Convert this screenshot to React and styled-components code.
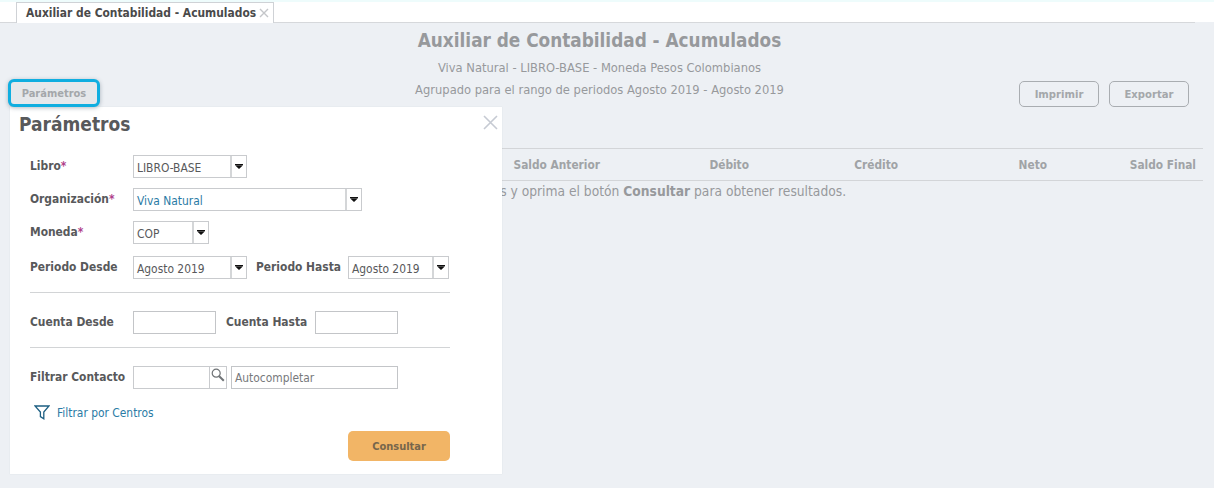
import React from "react";
import styled, { createGlobalStyle } from "styled-components";

const GlobalStyle = createGlobalStyle`
  html, body {
    margin: 0;
    padding: 0;
    background: #edf0f4;
    font-family: "DejaVu Sans Condensed", "DejaVu Sans", sans-serif;
    overflow: hidden;
  }
`;

const Page = styled.div`
  position: relative;
  width: 1214px;
  height: 488px;
  overflow: hidden;
`;

const TabBar = styled.div`
  height: 22px;
  box-sizing: border-box;
  background: #fff;
  border-top: 2px solid #eefcfc;
  padding-left: 16px;
  display: flex;
`;

const Tab = styled.div`
  height: 21px;
  box-sizing: border-box;
  border: 1px solid #cfd2d6;
  border-bottom: 0;
  background: #fff;
  padding: 0 4px 0 9px;
  display: flex;
  align-items: center;
  gap: 3px;
  font-size: 11.9px;
  font-weight: bold;
  color: #4a4a4a;
  position: relative;
  z-index: 1;
`;

const TabClose = styled.span`
  display: flex;
`;

const TabLine = styled.div`
  width: 1195px;
  height: 1px;
  background: #d6d8db;
`;

const Header = styled.div`
  width: 1199px;
  text-align: center;
  padding-top: 6px;
`;

const Title = styled.h1`
  margin: 0;
  font-size: 18.8px;
  line-height: 24px;
  font-weight: bold;
  color: #97999c;
`;

const Subtitle = styled.div`
  font-size: 12.8px;
  line-height: 22px;
  color: #97999c;
  margin-top: ${(p) => p.$top || 0}px;
`;

const Toolbar = styled.div`
  display: flex;
  justify-content: flex-end;
  gap: 10px;
  width: 1189px;
  margin-top: -20px;
`;

const OutlineButton = styled.button`
  width: 80px;
  height: 26px;
  box-sizing: border-box;
  border: 1px solid #a9adb1;
  border-radius: 5px;
  background: transparent;
  font: bold 11.2px "DejaVu Sans Condensed", "DejaVu Sans", sans-serif;
  color: #a4a7aa;
  padding: 0;
`;

const HeadRow = styled.div`
  margin-top: 41px;
  margin-left: 10px;
  width: 1193px;
  height: 33px;
  box-sizing: border-box;
  border-top: 1px solid #d3d5d8;
  border-bottom: 1px solid #d3d5d8;
  display: grid;
  grid-template-columns: 1fr repeat(5, 149px);
  align-items: center;
  padding-right: 7px;
`;

const HeadCell = styled.div`
  text-align: right;
  font-size: 11.8px;
  font-weight: bold;
  color: #a0a3a6;
`;

const Message = styled.div`
  margin-top: 1px;
  padding-left: 344px;
  font-size: 13.7px;
  line-height: 19px;
  color: #97999c;
  white-space: nowrap;

  b {
    font-weight: bold;
  }
`;

const ParamButton = styled.button`
  position: absolute;
  left: 8px;
  top: 79px;
  width: 92px;
  height: 28px;
  box-sizing: border-box;
  border: 3px solid #10aee0;
  border-radius: 6px;
  background: #e6e8eb;
  box-shadow: 0 1px 4px rgba(40, 60, 80, 0.35);
  font: bold 11px "DejaVu Sans Condensed", "DejaVu Sans", sans-serif;
  color: #a4a7aa;
  padding: 0;
  z-index: 3;
`;

const Panel = styled.div`
  position: absolute;
  left: 10px;
  top: 107px;
  width: 492px;
  height: 367px;
  box-sizing: border-box;
  background: #fff;
  box-shadow: 0 0 1px rgba(90, 100, 110, 0.18);
  padding: 6px 52px 0 20px;
  z-index: 2;
`;

const PanelTitle = styled.h2`
  margin: 0 0 0 -11px;
  font-size: 19px;
  line-height: 23px;
  font-weight: bold;
  color: #58595b;
`;

const CloseButton = styled.span`
  position: absolute;
  right: 4px;
  top: 8px;
  display: flex;
`;

const Rows = styled.div`
  margin-top: 19px;
  display: flex;
  flex-direction: column;
`;

const Row = styled.div`
  display: flex;
  align-items: center;
  height: 23px;
  margin-top: ${(p) => p.$top ?? 0}px;
  margin-bottom: ${(p) => p.$gap ?? 10}px;
`;

const Label = styled.label`
  width: ${(p) => p.$width || 103}px;
  margin-left: ${(p) => p.$left || 0}px;
  flex-shrink: 0;
  font-size: 11.9px;
  font-weight: bold;
  color: #58595b;
  white-space: nowrap;
  position: relative;
  top: -1px;

  i {
    font-style: normal;
    color: #b0408a;
  }
`;

const SelectBox = styled.div`
  width: ${(p) => p.$width}px;
  height: 23px;
  box-sizing: border-box;
  border: 1px solid #c9cbce;
  background: #fff;
  display: flex;
  align-items: center;
  flex-shrink: 0;
`;

const SelectValue = styled.span`
  flex: 1;
  padding: 2px 0 0 3px;
  font-size: 11.9px;
  color: ${(p) => (p.$link ? "#2b7ba5" : "#58595b")};
  white-space: nowrap;
`;

const SelectArrow = styled.span`
  width: 16px;
  height: 21px;
  box-sizing: border-box;
  border-left: 2px solid #d4d6d8;
  display: flex;
  align-items: center;
  justify-content: center;
`;

const TextInput = styled.div`
  width: ${(p) => p.$width}px;
  height: 23px;
  box-sizing: border-box;
  border: 1px solid #c3c5c8;
  background: #fff;
  padding-left: 3px;
  font-size: 11.9px;
  line-height: 23px;
  color: #77797c;
  flex-shrink: 0;
`;

const SearchInput = styled.div`
  width: 94px;
  height: 23px;
  box-sizing: border-box;
  border: 1px solid #c9cbce;
  display: flex;
  justify-content: flex-end;
  margin-right: 4px;
  flex-shrink: 0;
`;

const SearchAddon = styled.span`
  width: 17px;
  box-sizing: border-box;
  border-left: 1px solid #c9cbce;
  display: flex;
  justify-content: center;
  padding-top: 1px;
`;

const Divider = styled.hr`
  margin: 0;
  border: 0;
  height: 1px;
  width: 420px;
  background: #d2d4d6;
`;

const FilterLink = styled.a`
  margin: 14px 0 0 4px;
  display: flex;
  align-items: center;
  gap: 7px;
  height: 19px;
  font-size: 11.9px;
  color: #2b7ba5;
`;

const Footer = styled.div`
  display: flex;
  justify-content: flex-end;
  margin-top: 9px;
  width: 420px;
`;

const SubmitButton = styled.button`
  width: 102px;
  height: 30px;
  border: 0;
  border-radius: 5px;
  background: #f2b566;
  font: bold 11px "DejaVu Sans Condensed", "DejaVu Sans", sans-serif;
  color: #77664c;
  padding: 0;
`;

const Arrow = () => (
  <svg width="8" height="5" viewBox="0 0 8 5">
    <path d="M0 0h8v1H0zM0 1.2h8L4 5z" fill="#111" />
  </svg>
);

const Select = ({ width, value, link }) => (
  <SelectBox $width={width}>
    <SelectValue $link={link}>{value}</SelectValue>
    <SelectArrow>
      <Arrow />
    </SelectArrow>
  </SelectBox>
);

const columns = ["Saldo Anterior", "Débito", "Crédito", "Neto", "Saldo Final"];

export default function App() {
  return (
    <Page>
      <GlobalStyle />
      <TabBar>
        <Tab>
          Auxiliar de Contabilidad - Acumulados
          <TabClose>
            <svg width="10" height="10" viewBox="0 0 10 10">
              <path d="M1 1l8 8M9 1L1 9" stroke="#c4c6c9" strokeWidth="1.4" fill="none" />
            </svg>
          </TabClose>
        </Tab>
      </TabBar>
      <TabLine />
      <Header>
        <Title>Auxiliar de Contabilidad - Acumulados</Title>
        <Subtitle $top={4}>Viva Natural - LIBRO-BASE - Moneda Pesos Colombianos</Subtitle>
        <Subtitle>Agrupado para el rango de periodos Agosto 2019 - Agosto 2019</Subtitle>
      </Header>
      <Toolbar>
        <OutlineButton>Imprimir</OutlineButton>
        <OutlineButton>Exportar</OutlineButton>
      </Toolbar>
      <HeadRow>
        <div />
        {columns.map((c) => (
          <HeadCell key={c}>{c}</HeadCell>
        ))}
      </HeadRow>
      <Message>
        Seleccione los parámetros y oprima el botón <b>Consultar</b> para obtener resultados.
      </Message>

      <ParamButton>Parámetros</ParamButton>
      <Panel>
        <PanelTitle>Parámetros</PanelTitle>
        <CloseButton>
          <svg width="15" height="15" viewBox="0 0 15 15">
            <path d="M1 1l13 13M14 1L1 14" stroke="#c6cad3" strokeWidth="1.6" fill="none" />
          </svg>
        </CloseButton>
        <Rows>
          <Row>
            <Label>Libro<i>*</i></Label>
            <Select width={114} value="LIBRO-BASE" />
          </Row>
          <Row>
            <Label>Organización<i>*</i></Label>
            <Select width={229} value="Viva Natural" link />
          </Row>
          <Row $gap={12}>
            <Label>Moneda<i>*</i></Label>
            <Select width={76} value="COP" />
          </Row>
          <Row $gap={13}>
            <Label>Periodo Desde</Label>
            <Select width={114} value="Agosto 2019" />
            <Label $width={92} $left={9}>Periodo Hasta</Label>
            <Select width={101} value="Agosto 2019" />
          </Row>
          <Divider />
          <Row $gap={13} $top={18}>
            <Label>Cuenta Desde</Label>
            <TextInput $width={83} />
            <Label $width={89} $left={10}>Cuenta Hasta</Label>
            <TextInput $width={83} />
          </Row>
          <Divider />
          <Row $gap={0} $top={18}>
            <Label>Filtrar Contacto</Label>
            <SearchInput>
              <SearchAddon>
                <svg width="14" height="14" viewBox="0 0 14 14">
                  <circle cx="5.2" cy="5.2" r="4" stroke="#6f7376" strokeWidth="1.2" fill="none" />
                  <path d="M8.2 8.2l4.6 4.6" stroke="#6f7376" strokeWidth="2" />
                </svg>
              </SearchAddon>
            </SearchInput>
            <TextInput $width={167}>Autocompletar</TextInput>
          </Row>
          <FilterLink>
            <svg width="16" height="15" viewBox="0 0 16 15">
              <path d="M1 1h14L9.8 7v6.8L6.4 11.6V7z" stroke="#1d5f82" strokeWidth="1.3" fill="none" />
            </svg>
            Filtrar por Centros
          </FilterLink>
          <Footer>
            <SubmitButton>Consultar</SubmitButton>
          </Footer>
        </Rows>
      </Panel>
    </Page>
  );
}
